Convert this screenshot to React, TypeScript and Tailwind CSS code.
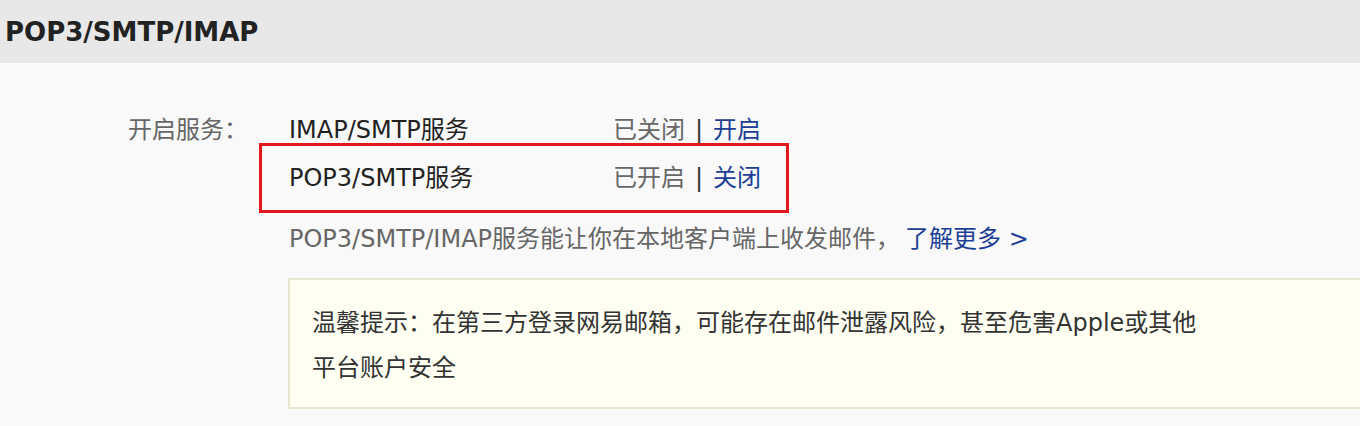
export default function App() {
  return (
    <div className="min-h-screen overflow-hidden bg-[#f9f9f9] font-['DejaVu_Sans','Noto_Sans_CJK_SC',sans-serif]">
      {/* Section header */}
      <div className="flex h-[63px] items-center bg-[#e8e8e8] pl-[5px]">
        <h2 className="text-[26px] font-bold leading-none text-[#222]">POP3/SMTP/IMAP</h2>
      </div>

      <div className="flex pl-[128px] pt-[43px] text-[24px]">
        <div className="w-[161px] shrink-0 leading-[48px] text-[#666]">开启服务：</div>

        <div className="flex-1">
          {/* Service rows */}
          <div className="flex leading-[48px]">
            <div className="w-[324px] text-[#222]">IMAP/SMTP服务</div>
            <div className="text-[#666]">
              已关闭<span className="px-[10px] text-[#333]">|</span>
              <a className="text-[#1c3f95]">开启</a>
            </div>
          </div>

          <div className="relative flex leading-[48px]">
            <div className="pointer-events-none absolute -top-[11px] -left-[30px] h-[70px] w-[530px] border-[3px] border-[#e0191f]" />
            <div className="w-[324px] text-[#222]">POP3/SMTP服务</div>
            <div className="text-[#666]">
              已开启<span className="px-[10px] text-[#333]">|</span>
              <a className="text-[#1c3f95]">关闭</a>
            </div>
          </div>

          <div className="mt-[13px] leading-[48px] text-[#666]">
            POP3/SMTP/IMAP服务能让你在本地客户端上收发邮件，
            <a className="ml-[5px] text-[#1c3f95]">了解更多 &gt;</a>
          </div>

          {/* Notice box */}
          <div className="-ml-px mt-[15px] w-[1200px] border-2 border-[#e6e6d2] bg-[#fefef2] pt-[21px] pb-[16px] pl-[22px] leading-[45px] text-[#333]">
            温馨提示：在第三方登录网易邮箱，可能存在邮件泄露风险，甚至危害Apple或其他
            <br />
            平台账户安全
          </div>
        </div>
      </div>
    </div>
  );
}
